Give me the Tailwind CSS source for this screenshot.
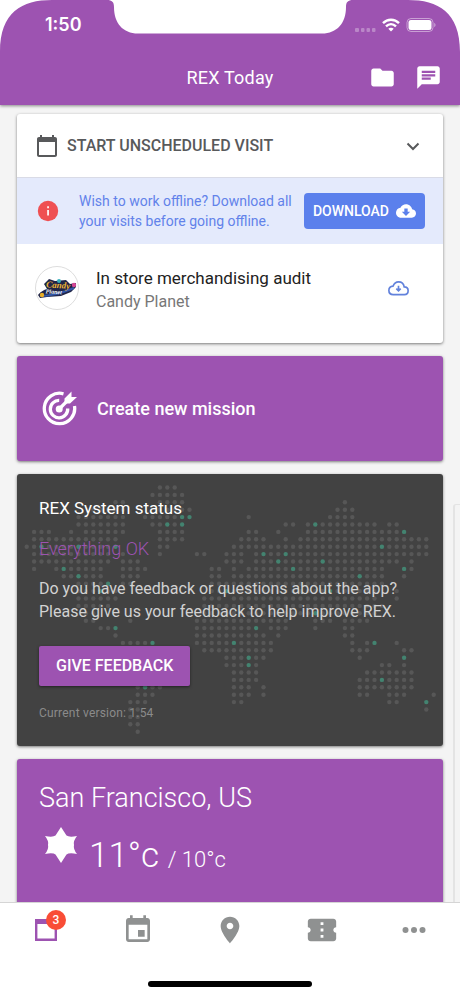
<!DOCTYPE html>
<html lang="en">
<head>
<meta charset="utf-8">
<meta name="viewport" content="width=device-width, initial-scale=1">
<title>REX Today</title>
<script src="https://cdn.jsdelivr.net/npm/@tailwindcss/browser@4"></script>
</head>
<body class="bg-white font-[Roboto,sans-serif]">
<div class="relative flex h-screen flex-col overflow-hidden bg-[#f4f4f4]">

  <header class="relative z-10 bg-[#9d53b1] text-white shadow-[0_1px_3px_rgba(0,0,0,0.45)]">
    <svg class="absolute top-0 left-0 h-[52px] w-[52px]" viewBox="0 0 52 52" fill="#fff" aria-hidden="true"><path d="M0 0H52C22 0 0 12 0 52Z"/></svg>
    <svg class="absolute top-0 right-0 h-[52px] w-[52px]" viewBox="0 0 52 52" fill="#fff" aria-hidden="true"><path d="M52 0H0C30 0 52 12 52 52Z"/></svg>
    <svg class="absolute top-0 left-1/2 h-[34px] w-[246px] -translate-x-1/2" viewBox="0 0 246 34" fill="#fff" aria-hidden="true"><path d="M0 0C5 0 7 2 7 7C7 23 16 33.500 31 33.500H215C230 33.500 239 23 239 7C239 2 241 0 246 0Z"/></svg>
    <div class="flex h-[50px] items-center justify-between pr-6 pl-[45px]">
      <span class="font-[Inter,sans-serif] text-[18px] leading-6 font-semibold">1:50</span>
      <span class="flex items-center gap-[6px]">
        <svg width="22" height="16" viewBox="0 0 22 16" fill="#fff" fill-opacity=".3" aria-hidden="true"><rect x="1" y="11" width="4" height="4" rx="1"/><rect x="7" y="11" width="3.500" height="4" rx="1"/><rect x="12.500" y="11" width="3.500" height="4" rx="1"/><rect x="18" y="11" width="3.500" height="4" rx="1"/></svg>
        <svg width="18" height="14" viewBox="0 0 18 14" fill="none" stroke="#fff" stroke-width="2.400" aria-hidden="true"><path d="M1 5.200C5.500.6 12.500.6 17 5.200"/><path d="M4 8.300C7 5.400 11 5.400 14 8.300"/><path d="M9 13.500L6.300 10.800C7.800 9.400 10.200 9.400 11.700 10.800Z" fill="#fff" stroke="none"/></svg>
        <svg width="30" height="14" viewBox="0 0 30 14" aria-hidden="true"><rect x="1" y=".5" width="26" height="13" rx="4" fill="none" stroke="#fff" stroke-opacity=".45"/><rect x="2.500" y="2" width="23" height="10" rx="2.500" fill="#fff"/><path d="M28.200 5C30 5.500 30 8.500 28.200 9Z" fill="#fff" fill-opacity=".45"/></svg>
      </span>
    </div>
    <div class="relative flex h-[55px] items-center justify-center">
      <h1 class="text-[18px] leading-6 tracking-[0.2px]">REX Today</h1>
      <div class="absolute right-[18px] flex gap-[19px]">
        <button aria-label="Files"><svg width="27" height="27" viewBox="0 0 24 24" fill="#fff"><path d="M10 4H4c-1.100 0-1.990.9-1.990 2L2 18c0 1.100.9 2 2 2h16c1.100 0 2-.9 2-2V8c0-1.100-.9-2-2-2h-8l-2-2z"/></svg></button>
        <button aria-label="Messages"><svg width="27" height="27" viewBox="0 0 24 24" fill="#fff"><path d="M20 2H4c-1.100 0-1.990.9-1.990 2L2 22l4-4h14c1.100 0 2-.9 2-2V4c0-1.100-.9-2-2-2zM6 9h12v2H6V9zm8 5H6v-2h8v2zm4-6H6V6h12v2z"/></svg></button>
      </div>
    </div>
  </header>

  <main class="relative flex-1 overflow-y-auto px-[17px] pt-[9px] [scrollbar-width:none]">
    <div class="flex flex-col gap-[13px] pb-4">

      <section class="rounded-[3px] bg-white shadow-[0_1px_3px_rgba(0,0,0,0.5)]">
        <button class="flex h-16 w-full items-center border-b border-[#d9dbe6] px-[18px] text-left text-[#58595b]">
          <svg width="24" height="24" viewBox="0 0 24 24" fill="currentColor" aria-hidden="true"><path d="M20 3h-1V1h-2v2H7V1H5v2H4c-1.100 0-2 .9-2 2v16c0 1.100.9 2 2 2h16c1.100 0 2-.9 2-2V5c0-1.100-.9-2-2-2zm0 18H4V8h16v13z"/></svg>
          <span class="flex-1 pl-2 text-[16px] leading-6 font-medium">START UNSCHEDULED VISIT</span>
          <svg width="24" height="24" viewBox="0 0 24 24" fill="none" stroke="currentColor" stroke-width="2" aria-hidden="true"><path d="M6.500 9.500L12 15l5.500-5.500"/></svg>
        </button>
        <div class="flex h-[66px] items-center bg-[#e4eafc] pr-[18px] pl-[19px]">
          <svg width="24" height="24" viewBox="0 0 24 24" aria-hidden="true"><circle cx="12" cy="12" r="10.200" fill="#ef5053"/><path d="M11.200 11h1.700v5.500h-1.700zM11.200 7.300h1.700v1.900h-1.700z" fill="#fff"/></svg>
          <p class="flex-1 pl-[19px] text-[14px] leading-5 text-[#6282ea]">Wish to work offline? Download all<br>your visits before going offline.</p>
          <button class="flex h-9 items-center gap-[7px] rounded-[4px] bg-[#5b80ec] px-[9px] text-[14px] leading-5 font-medium text-white">DOWNLOAD
            <svg width="20" height="20" viewBox="0 0 24 24" fill="#fff" aria-hidden="true"><path d="M19.350 10.040C18.670 6.590 15.640 4 12 4 9.110 4 6.600 5.640 5.350 8.040 2.340 8.360 0 10.910 0 14c0 3.310 2.690 6 6 6h13c2.760 0 5-2.240 5-5 0-2.640-2.050-4.780-4.650-4.960zM17 13l-5 5-5-5h3V9h4v4h3z"/></svg>
          </button>
        </div>
        <div class="flex h-[99px] items-start px-[18px] pt-[22px]">
          <svg width="44" height="44" viewBox="0 0 44 44" role="img" aria-label="Candy Planet logo">
            <circle cx="22" cy="22" r="21.500" fill="#fff" stroke="#ddd"/>
            <path d="M3 29C6 25 9 24 12 23L9 18L14 13L20 15L31 14L35 18L41 17L41 21L36 26L26 30L12 31L5 32Z" fill="#202548"/>
            <path d="M5 30Q20 30 39 22" stroke="#3157a8" stroke-width="2" fill="none"/>
            <circle cx="7" cy="29" r="2.200" fill="#e9ae27"/><circle cx="39" cy="19" r="2.200" fill="#d34694"/><circle cx="24" cy="15" r="2" fill="#38b0bc"/>
            <g font-family="Liberation Serif, serif" font-style="italic" font-weight="700" transform="rotate(4 22 22)"><text x="11" y="22" font-size="9" fill="#efb533">Candy</text><text x="11" y="28" font-size="6" fill="#fff">Planet</text></g>
          </svg>
          <div class="flex-1 pl-[17px]">
            <h2 class="text-[17px] leading-6 text-[#222]">In store merchandising audit</h2>
            <p class="text-[16px] leading-6 text-[#777]">Candy Planet</p>
          </div>
          <button class="mt-3 mr-4" aria-label="Download visit"><svg width="21" height="20" viewBox="0 0 24 22" fill="none" stroke="#6282dc" stroke-width="1.900"><path d="M6 18.500C3 18.500 1 16.500 1 13.800C1 11 3 9 5.800 8.800C7 5.700 9.200 4 12 4C15.500 4 18 6.300 18.500 9.800C21.200 9.800 23 11.700 23 14.100C23 16.600 21.200 18.500 18.700 18.500Z"/><path d="M12 8.500v5M9.500 11.700L12 14.200L14.500 11.700"/></svg></button>
        </div>
      </section>

      <button class="flex h-[105px] w-full items-center rounded-[3px] bg-[#9d53b1] pl-[25px] text-left text-[18px] leading-6 font-medium text-white shadow-[0_1px_3px_rgba(0,0,0,0.5)]">
        <svg width="36" height="36" viewBox="0 0 36 36" fill="none" stroke="#fff" stroke-width="3.300" aria-hidden="true"><path d="M21.500 2.800A15.200 15.200 0 1 0 32.500 15"/><path d="M17.200 9.400A8.700 8.700 0 1 0 25.700 17.500"/><circle cx="17.200" cy="18" r="3.500" fill="#fff" stroke="none"/><path d="M17.200 18L27 8.200"/><path d="M22.500 12.500V7.500L29.500.5V6H35L28 12.500Z" fill="#fff" stroke="none"/></svg>
        <span class="pl-[19px]">Create new mission</span>
      </button>

      <section class="relative overflow-hidden rounded-[3px] bg-[#424242] px-[22px] pt-[22px] pb-6 text-white shadow-[0_1px_3px_rgba(0,0,0,0.5)]">
        <svg id="map" class="absolute inset-0 h-full w-full" viewBox="0 0 426 272" aria-hidden="true"></svg>
        <div class="relative flex flex-col items-start">
          <h2 class="text-[17px] leading-6">REX System status</h2>
          <p class="mt-[17px] text-[18px] leading-6 font-light text-[#9d53b1]">Everything OK</p>
          <p class="mt-4 text-[16px] leading-[23px] text-[#d2d2d2]">Do you have feedback or questions about the app?<br>Please give us your feedback to help improve REX.</p>
          <button class="mt-[23px] h-10 rounded-[2px] bg-[#9d53b1] px-[17px] text-[16px] leading-6 font-medium shadow-[0_1px_3px_rgba(0,0,0,0.5)]">GIVE FEEDBACK</button>
          <p class="mt-[18px] text-[12px] leading-[18px] tracking-[0.2px] text-[#8b8b8b]">Current version: 1.54</p>
        </div>
      </section>

      <section class="rounded-[3px] bg-[#9d53b1] px-[22px] pt-[23px] pb-10 text-white shadow-[0_1px_3px_rgba(0,0,0,0.5)]">
        <h2 class="text-[27px] leading-8 font-light">San Francisco, US</h2>
        <div class="mt-3 flex items-start">
          <svg class="ml-[5px]" width="34" height="38" viewBox="0 0 34 38" fill="#fff" aria-hidden="true"><path d="M17 1L22.500 9.500Q25 11.500 33 10Q29 15 30 19Q29 23 33 28Q25 26.500 22.500 28.500L17 37L11.500 28.500Q9 26.500 1 28Q5 23 4 19Q5 15 1 10Q9 11.500 11.500 9.500Z"/></svg>
          <p class="pt-[10px] pl-[11px] text-[35px] leading-10 font-light">11°c <span class="text-[22px]">/ 10°c</span></p>
        </div>
      </section>
    </div>
  </main>

  <div class="absolute top-[504px] right-0 bottom-[94px] w-[7px] rounded-tl-[3px] border-t border-l-2 border-[#e4e4e4]" aria-hidden="true"></div>

  <nav class="relative z-10 h-[94px] border-t border-[#d5d5d5] bg-white text-[#8f9191]">
    <div class="grid h-[54px] grid-cols-5 place-items-center">
      <a href="#today" aria-label="Today, 3 new" class="relative text-[#9d53b1]">
        <svg width="24" height="24" viewBox="0 0 24 24" fill="none" stroke="currentColor" aria-hidden="true"><path d="M2.200 3V21.800H21.800V3" stroke-width="2.400"/><path d="M1 3.500H23" stroke-width="5"/></svg>
        <span class="absolute -top-2 left-3 flex h-5 w-5 items-center justify-center rounded-full bg-[#f94d36] text-[12px] leading-5 font-medium text-white">3</span>
      </a>
      <a href="#calendar" aria-label="Calendar"><svg width="32" height="32" viewBox="0 0 24 24" fill="currentColor"><path d="M17 12h-5v5h5v-5zM16 1v2H8V1H6v2H5c-1.110 0-1.990.9-1.990 2L3 19c0 1.100.89 2 2 2h14c1.100 0 2-.9 2-2V5c0-1.100-.9-2-2-2h-1V1h-2zm3 18H5V8h14v11z"/></svg></a>
      <a href="#places" aria-label="Places"><svg width="32" height="32" viewBox="0 0 24 24" fill="currentColor"><path d="M12 2C8.130 2 5 5.130 5 9c0 5.250 7 13 7 13s7-7.750 7-13c0-3.870-3.130-7-7-7zm0 9.500c-1.380 0-2.500-1.120-2.500-2.500s1.120-2.500 2.500-2.500 2.500 1.120 2.500 2.500-1.120 2.500-2.500 2.500z"/></svg></a>
      <a href="#tickets" aria-label="Tickets"><svg width="34" height="34" viewBox="0 0 24 24" fill="currentColor"><path d="M22 10V6c0-1.110-.9-2-2-2H4c-1.100 0-1.990.89-1.990 2v4c1.100 0 1.990.9 1.990 2s-.89 2-2 2v4c0 1.100.9 2 2 2h16c1.100 0 2-.9 2-2v-4c-1.100 0-2-.9-2-2s.9-2 2-2zm-9 7.500h-2v-2h2v2zm0-4.500h-2v-2h2v2zm0-4.500h-2v-2h2v2z"/></svg></a>
      <a href="#more" aria-label="More"><svg width="24" height="24" viewBox="0 0 24 24" fill="currentColor"><circle cx="3.500" cy="12" r="3"/><circle cx="12" cy="12" r="3"/><circle cx="20.500" cy="12" r="3"/></svg></a>
    </div>
    <div class="mx-auto mt-6 h-[6px] w-[164px] rounded-full bg-black"></div>
  </nav>
</div>

<script>
// World map: one entry per row, column ranges separated by commas; "g" marks a highlighted dot.
const rows = [
  '18-20', '17-21', '12-13,18-21,43', '9-13,18-22,42-44', '7-13,16-20,21g,22g,30,41-44',
  '7-13,17-18,19g,20,21g,35-36,38,39g,40-47,49-50', '1-3,6,8-13,18-21,30-31,34,38-50,51g',
  '1-12,18-21,29-32,35,37-54', '0-1,2g,3-6,7g,8-11,12g,18-19,28-47,48g,49-54',
  '1-11,13,18,23-24,27-29,31,32g,33-34,35g,36-54', '1-11,13-15,27-29,31-33,34g,35-39,40g,41-50,52',
  '1,4,5g,6-10,13-16,25-26,28,30-35,36g,37-48,51g,52', '5-6,7g,8-10,13-15,25-26,28-44,45g,46-48,51',
  '7-10,11g,13-14,25-48', '7-9,10g,11-12,25-26,27g,28-40,41g,42-47,50', '7-12,24-26,28-47,50',
  '7-11,24-48', '8-9,24-38,39g,40-47', '8-9,14,23-35,39-41,43-46', '10-11,12g,23-30,31g,33-35,39,43-44',
  '12,23-32,34,43-44', '13-16,17g,23-27,28g,29-33,44,46,47g,50', '13-17,24-33,44-46,51-52',
  '13-18,27-29,30g,31-32,45,51g', '13-19,27-29,30g,31,48-49,51', '14-19,28-31,46-52',
  '14-18,28-31,45-47,48g,49-52', '15,16g,17-18,28-30,32,45-52', '15-17,28-30,32,45-46,49-51,55',
  '14-16,28-29,49-50,54g', '14-15,54', '14-15', '14-15', '15'
];
const map = document.getElementById('map');
rows.forEach((row, r) => row.split(',').forEach(part => {
  const [from, to = from] = part.replace('g', '').split('-').map(Number);
  for (let c = from; c <= to; c++) {
    const dot = document.createElementNS('http://www.w3.org/2000/svg', 'circle');
    dot.setAttribute('cx', 9.7 + 7.4 * c);
    dot.setAttribute('cy', 13.5 + 7.4 * r);
    dot.setAttribute('r', 2.2);
    dot.setAttribute('fill', part.endsWith('g') ? '#438370' : '#575757');
    map.appendChild(dot);
  }
}));
</script>
</body>
</html>
